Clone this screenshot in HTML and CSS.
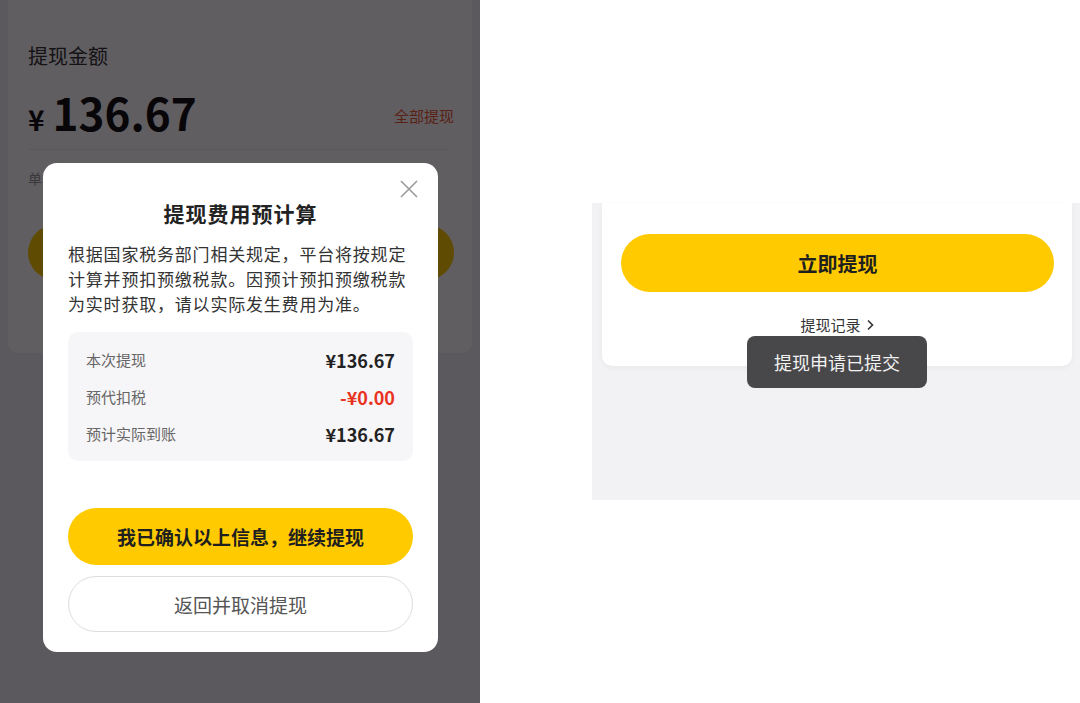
FILE: index.html
```html
<!DOCTYPE html>
<html lang="zh-CN">
<head>
    <meta charset="UTF-8">
    <meta name="viewport" content="width=device-width, initial-scale=1.0">
    <title>提现</title>
    <link rel="stylesheet" href="styles.css">
</head>
<body>
    <div class="screen">
        <!-- 左：费用预计算弹窗 -->
        <section class="phone">
            <div class="amount-card">
                <div class="amount-label">提现金额</div>
                <div class="amount-row">
                    <div class="amount-value">
                        <span class="yen">¥</span><span class="amount">136.67</span>
                    </div>
                    <a class="withdraw-all">全部提现</a>
                </div>
                <div class="amount-tip">单笔提现金额不低于1元</div>
                <!-- 被弹窗遮住的按钮，只留底色 -->
                <div class="btn-primary btn-card"></div>
            </div>

            <div class="mask"></div>

            <div class="dialog">
                <svg class="dialog-close" width="18" height="18" viewBox="0 0 18 18">
                    <path d="M1 1 L17 17 M17 1 L1 17" stroke="#9a9a9a" stroke-width="1.6" fill="none"/>
                </svg>
                <h2 class="dialog-title">提现费用预计算</h2>
                <p class="dialog-text">根据国家税务部门相关规定，平台将按规定计算并预扣预缴税款。因预计预扣预缴税款为实时获取，请以实际发生费用为准。</p>

                <div class="fee-box">
                    <div class="fee-row">
                        <span class="fee-label">本次提现</span>
                        <span class="fee-value">¥136.67</span>
                    </div>
                    <div class="fee-row">
                        <span class="fee-label">预代扣税</span>
                        <span class="fee-value fee-minus">-¥0.00</span>
                    </div>
                    <div class="fee-row">
                        <span class="fee-label">预计实际到账</span>
                        <span class="fee-value">¥136.67</span>
                    </div>
                </div>

                <button class="btn-primary btn-confirm">我已确认以上信息，继续提现</button>
                <button class="btn-outline">返回并取消提现</button>
            </div>
        </section>

        <!-- 右：提交成功提示 -->
        <section class="result">
            <div class="result-frame">
                <div class="result-card">
                    <button class="btn-primary btn-large">立即提现</button>
                    <div class="record-link">
                        提现记录
                        <svg width="9" height="12" viewBox="0 0 9 12">
                            <path d="M2 1.5 L6.5 6 L2 10.5" stroke="#333" stroke-width="1.6" fill="none"/>
                        </svg>
                    </div>
                </div>
                <div class="toast">提现申请已提交</div>
            </div>
        </section>
    </div>
</body>
</html>
```

FILE: styles.css
```css
/* 提现页面 */
body {
    margin: 0;
    font-family: "Noto Sans CJK SC", "Noto Sans", sans-serif;
    background-color: #fff;
    color: #333;
}
.screen {
    display: flex;
    width: 1080px;
    height: 703px;
    overflow: hidden;
}
button {
    font-family: inherit;
    border: none;
    cursor: pointer;
    padding: 0;
}

/* 左侧手机画面 */
.phone {
    position: relative;
    width: 480px;
    height: 703px;
    background-color: #f2f1f3;
    flex-shrink: 0;
}
.amount-card {
    margin: 0 8px;
    height: 353px;
    box-sizing: border-box;
    padding: 42px 18px 0 20px;
    background-color: #fff;
    border-radius: 0 0 10px 10px;
}
.amount-label {
    font-size: 20px;
    line-height: 28px;
    color: #333;
}
.amount-row {
    display: flex;
    align-items: center;
    height: 56px;
    margin-top: 14px;
    padding-bottom: 9px;
    margin-right: 6px;
    border-bottom: 1px solid #eeeeee;
}
.amount-value {
    display: flex;
    align-items: baseline;
    color: #111;
    font-weight: 700;
}
.yen {
    font-size: 28px;
    margin-right: 8px;
}
.amount {
    font-size: 44px;
    line-height: 56px;
}
.withdraw-all {
    margin-left: auto;
    margin-right: -6px;
    margin-top: 6px;
    font-size: 15px;
    color: #ee5a34;
}
.amount-tip {
    margin-top: 18px;
    font-size: 14px;
    line-height: 20px;
    color: #999;
}
.btn-primary {
    display: block;
    width: 100%;
    background-color: #ffcb00;
    color: #1f1f1f;
    font-weight: 700;
}
.btn-card {
    margin-top: 37px;
    height: 55px;
    border-radius: 28px;
}
.record-link {
    display: flex;
    align-items: center;
    justify-content: center;
    gap: 5px;
    font-size: 15px;
    line-height: 20px;
    color: #333;
    margin-top: 23px;
}
.mask {
    position: absolute;
    inset: 0;
    background-color: rgba(3, 0, 4, 0.63);
}

/* 弹窗 */
.dialog {
    position: absolute;
    left: 43px;
    top: 163px;
    width: 395px;
    box-sizing: border-box;
    padding: 35px 25px 20px;
    background-color: #fff;
    border-radius: 14px;
}
.dialog-close {
    position: absolute;
    top: 17px;
    right: 20px;
}
.dialog-title {
    margin: 0;
    text-align: center;
    font-size: 21px;
    line-height: 31px;
    font-weight: 700;
    color: #222;
    letter-spacing: 1px;
}
.dialog-text {
    margin: 12px 0 0;
    font-size: 17px;
    line-height: 25px;
    letter-spacing: 0.8px;
    color: #333;
}
.fee-box {
    margin-top: 16px;
    padding: 9px 18px;
    background-color: #f6f5f7;
    border-radius: 10px;
}
.fee-row {
    display: flex;
    justify-content: space-between;
    align-items: center;
    height: 37px;
}
.fee-label {
    font-size: 15px;
    color: #666;
}
.fee-value {
    font-size: 18px;
    font-weight: 700;
    color: #222;
}
.fee-minus {
    color: #e8321e;
}
.btn-confirm {
    margin-top: 47px;
    height: 57px;
    border-radius: 29px;
    font-size: 19px;
}
.btn-outline {
    display: block;
    width: 100%;
    margin-top: 11px;
    height: 56px;
    border-radius: 28px;
    border: 1.5px solid #dddddd;
    background-color: #fff;
    color: #555;
    font-size: 19px;
}

/* 右侧结果画面 */
.result {
    width: 600px;
    padding: 203px 0 0 112px;
    box-sizing: border-box;
}
.result-frame {
    position: relative;
    width: 488px;
    height: 297px;
    background-color: #f2f1f3;
}
.result-card {
    margin: 0 8px 0 10px;
    height: 163px;
    box-sizing: border-box;
    padding: 31px 18px 0 19px;
    background-color: #fff;
    border-radius: 0 0 10px 10px;
    box-shadow: 0 2px 6px rgba(0, 0, 0, 0.04);
}
.btn-large {
    height: 58px;
    border-radius: 29px;
    font-size: 20px;
}
.toast {
    position: absolute;
    left: 155px;
    top: 133px;
    width: 180px;
    height: 52px;
    display: flex;
    align-items: center;
    justify-content: center;
    background-color: #48474a;
    border-radius: 8px;
    color: #f2f2f2;
    font-size: 18px;
}
```
